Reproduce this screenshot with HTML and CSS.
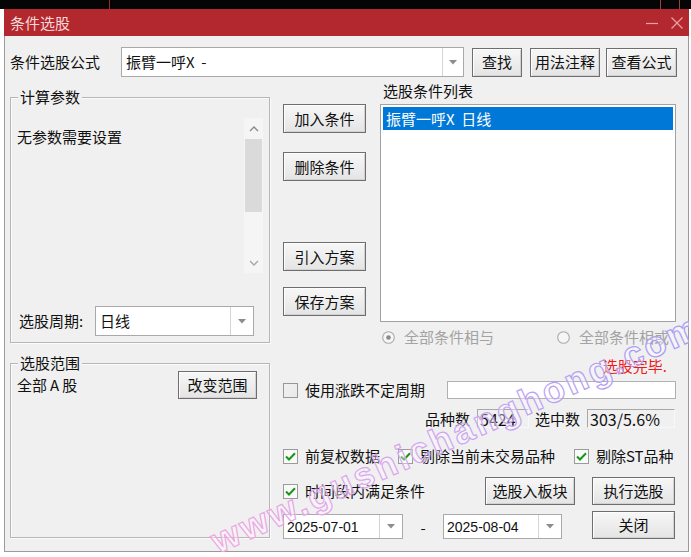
FILE: index.html
```html
<!DOCTYPE html>
<html lang="zh-CN">
<head>
<meta charset="utf-8">
<title>条件选股</title>
<link rel="stylesheet" href="styles.css">
</head>
<body>
<div class="topstrip"></div>
<div class="window">
  <div class="titlebar">
    <span class="title">条件选股</span>
    <span class="tb-btns">
      <svg class="tb-min" width="14" height="14" viewBox="0 0 14 14"><line x1="1" y1="7.5" x2="13" y2="7.5" stroke="currentColor" stroke-width="1.2"/></svg>
      <svg class="tb-close" width="14" height="14" viewBox="0 0 14 14"><path d="M1.5 1.5 L12.5 12.5 M12.5 1.5 L1.5 12.5" stroke="currentColor" stroke-width="1.2" fill="none"/></svg>
    </span>
  </div>
  <div class="body">
    <div class="row1">
      <span class="lbl formula-lbl">条件选股公式</span>
      <div class="combo formula-combo">
        <span class="combo-text">振臂一呼X&nbsp;&nbsp;-</span>
        <span class="combo-arrow"><svg width="8" height="5" viewBox="0 0 8 5"><path d="M0 0 H8 L4 4.5 Z" fill="#8c8c8c"/></svg></span>
      </div>
      <button class="btn btn-find">查找</button>
      <button class="btn btn-usage">用法注释</button>
      <button class="btn btn-view">查看公式</button>
    </div>
    <div class="main">
      <div class="leftcol">
        <div class="group group-params">
          <div class="group-title">计算参数</div>
          <div class="params">
            <div class="params-text">无参数需要设置</div>
            <div class="vscroll">
              <div class="sb-arrow"><svg width="10" height="6" viewBox="0 0 10 6"><polyline points="1,5 5,1 9,5" fill="none" stroke="#8a8a8a" stroke-width="1.4"/></svg></div>
              <div class="sb-thumb"></div>
              <div class="sb-track"></div>
              <div class="sb-arrow"><svg width="10" height="6" viewBox="0 0 10 6"><polyline points="1,1 5,5 9,1" fill="none" stroke="#a8a8a8" stroke-width="1.4"/></svg></div>
            </div>
          </div>
          <div class="period-row">
            <span class="lbl period-lbl">选股周期:</span>
            <div class="combo period-combo">
              <span class="combo-text">日线</span>
              <span class="combo-arrow"><svg width="8" height="5" viewBox="0 0 8 5"><path d="M0 0 H8 L4 4.5 Z" fill="#8c8c8c"/></svg></span>
            </div>
          </div>
        </div>
        <div class="group group-range">
          <div class="group-title">选股范围</div>
          <div class="range-row">
            <span class="range-text">全部<span class="latin-a">A</span>股</span>
            <button class="btn btn-range">改变范围</button>
          </div>
        </div>
      </div>
      <div class="rightcol">
        <div class="upper">
          <div class="btncol">
            <button class="btn btn-side">加入条件</button>
            <button class="btn btn-side btn-del">删除条件</button>
            <button class="btn btn-side btn-import">引入方案</button>
            <button class="btn btn-side btn-save">保存方案</button>
          </div>
          <div class="listcol">
            <div class="list-lbl">选股条件列表</div>
            <div class="listbox">
              <div class="list-item selected">振臂一呼X&nbsp;&nbsp;日线</div>
            </div>
            <div class="radios">
              <span class="radio-item radio-and">
                <svg class="radio" width="13" height="13" viewBox="0 0 13 13"><circle cx="6.5" cy="6.5" r="5.8" fill="#f6f6f6" stroke="#a9a9a9" stroke-width="1.1"/><circle cx="6.5" cy="6.5" r="2.3" fill="#8a8a8a"/></svg>
                <span class="radio-text">全部条件相与</span>
              </span>
              <span class="radio-item radio-or">
                <svg class="radio" width="13" height="13" viewBox="0 0 13 13"><circle cx="6.5" cy="6.5" r="5.8" fill="#f6f6f6" stroke="#a9a9a9" stroke-width="1.1"/></svg>
                <span class="radio-text">全部条件相或</span>
              </span>
            </div>
          </div>
        </div>
        <div class="status">选股完毕.</div>
        <div class="row-period">
          <span class="check"></span>
          <span class="opt-text">使用涨跌不定周期</span>
          <div class="textbox period-input"></div>
        </div>
        <div class="row-counts">
          <span class="cnt-lbl">品种数</span>
          <span class="cnt-box cnt-total">5424</span>
          <span class="cnt-lbl cnt-lbl2">选中数</span>
          <span class="cnt-box cnt-sel">303/5.6%</span>
        </div>
        <div class="row-opts">
          <span class="opt opt-fq"><span class="check checked"><svg width="11" height="9" viewBox="0 0 11 9"><polyline points="1,4.5 4,7.5 10,1.2" fill="none" stroke="#169816" stroke-width="2"/></svg></span><span class="opt-text">前复权数据</span></span>
          <span class="opt opt-trade"><span class="check checked"><svg width="11" height="9" viewBox="0 0 11 9"><polyline points="1,4.5 4,7.5 10,1.2" fill="none" stroke="#169816" stroke-width="2"/></svg></span><span class="opt-text">剔除当前未交易品种</span></span>
          <span class="opt opt-st"><span class="check checked"><svg width="11" height="9" viewBox="0 0 11 9"><polyline points="1,4.5 4,7.5 10,1.2" fill="none" stroke="#169816" stroke-width="2"/></svg></span><span class="opt-text">剔除ST品种</span></span>
        </div>
        <div class="row-actions">
          <span class="opt opt-period"><span class="check checked"><svg width="11" height="9" viewBox="0 0 11 9"><polyline points="1,4.5 4,7.5 10,1.2" fill="none" stroke="#169816" stroke-width="2"/></svg></span><span class="opt-text">时间段内满足条件</span></span>
          <button class="btn btn-block">选股入板块</button>
          <button class="btn btn-run">执行选股</button>
        </div>
        <div class="row-dates">
          <div class="combo date-combo">
            <span class="combo-text date-text">2025-07-01</span>
            <span class="combo-arrow"><svg width="8" height="5" viewBox="0 0 8 5"><path d="M0 0 H8 L4 4.5 Z" fill="#8c8c8c"/></svg></span>
          </div>
          <span class="dash">-</span>
          <div class="combo date-combo date2">
            <span class="combo-text date-text">2025-08-04</span>
            <span class="combo-arrow"><svg width="8" height="5" viewBox="0 0 8 5"><path d="M0 0 H8 L4 4.5 Z" fill="#8c8c8c"/></svg></span>
          </div>
          <button class="btn btn-close">关闭</button>
        </div>
      </div>
    </div>
  </div>
  <svg class="watermark" width="687" height="548" viewBox="0 0 687 548">
    <defs>
      <linearGradient id="wmgrad" gradientUnits="userSpaceOnUse" x1="214" y1="0" x2="684" y2="0">
        <stop offset="0" stop-color="#f2a4e2"/>
        <stop offset="0.5" stop-color="#d2a6f2"/>
        <stop offset="1" stop-color="#a99cf4"/>
      </linearGradient>
    </defs>
    <text x="214" y="545" transform="rotate(-24.2 214 545)" textLength="530" lengthAdjust="spacing" class="wm-text" fill="rgba(255,255,255,0.4)" stroke="url(#wmgrad)" stroke-width="1.2">www.gushichanghong.com</text>
  </svg>
</div>
</body>
</html>
```

FILE: styles.css
```css
* { box-sizing: border-box; }

html, body {
  margin: 0;
  padding: 0;
  background: #ffffff;
}

body {
  width: 691px;
  height: 557px;
  overflow: hidden;
  font-family: "Noto Sans CJK SC", "Microsoft YaHei", sans-serif;
  font-size: 15px;
  line-height: 20px;
  color: #111;
}

.topstrip {
  height: 9px;
  background-color: #050505;
  background-image:
    linear-gradient(#9c2a2a, #9c2a2a),
    linear-gradient(#9c4040, #9c4040),
    linear-gradient(#9c4040, #9c4040);
  background-size: 1px 9px, 1px 9px, 1px 9px;
  background-position: 109px 0, 660px 0, 679px 0;
  background-repeat: no-repeat;
}

.window {
  position: relative;
  margin-left: 4px;
  width: 685px;
  height: 543px;
  overflow: hidden;
}

.titlebar {
  height: 27px;
  background: #b3282e;
  display: flex;
  align-items: center;
  padding-left: 6px;
}

.title {
  color: #f6dada;
  font-size: 15px;
  line-height: 20px;
}

.tb-btns {
  margin-left: auto;
  display: flex;
  align-items: center;
  color: #e7a2a5;
  padding-right: 5px;
}

.tb-min { margin-right: 11px; }

.body {
  height: 516px;
  background: #f0f0f0;
  border: 1px solid #9a9a9a;
  border-top: none;
  padding: 11px 0 0 5px;
}

/* row 1 */
.row1 {
  display: flex;
  align-items: center;
  height: 30px;
}

.formula-lbl { width: 111px; }

.combo {
  display: flex;
  align-items: center;
  background: #fff;
  border: 1px solid #a9a9a9;
}

.combo-text {
  flex: 1;
  padding-left: 4px;
  white-space: nowrap;
  overflow: hidden;
}

.combo-arrow {
  align-self: stretch;
  display: flex;
  align-items: center;
  justify-content: center;
  border-left: 1px solid #d4d4d4;
}

.formula-combo { width: 343px; height: 30px; }
.formula-combo .combo-arrow { width: 21px; }

.btn {
  font-family: inherit;
  font-size: 15px;
  line-height: 20px;
  color: #111;
  padding: 0;
  border: 1px solid #6e6e6e;
  border-radius: 0;
  background: linear-gradient(#f7f7f7, #e4e4e4);
  box-shadow: inset 1px 1px 0 #fdfdfd, inset -1px -1px 0 #d2d2d2;
  height: 29px;
}

.btn-find { margin-left: 8px; width: 50px; }
.btn-usage { margin-left: 8px; width: 70px; }
.btn-view { margin-left: 6px; width: 71px; }

/* main */
.main {
  display: flex;
  align-items: flex-start;
}

.leftcol {
  width: 260px;
  padding-top: 20px;
}

.group {
  border: 1px solid #b6b6b6;
  box-shadow: 1px 1px 0 #fbfbfb, inset 1px 1px 0 #fbfbfb;
}

.group-title {
  width: fit-content;
  margin: -11px 0 0 7px;
  padding: 0 2px;
  line-height: 20px;
  background: #f0f0f0;
}

.group-params { height: 246px; }

.params {
  display: flex;
  margin: 11px 0 0 3px;
  width: 249px;
  height: 155px;
}

.params-text {
  flex: 1;
  padding: 9px 0 0 3px;
}

.vscroll {
  width: 19px;
  display: flex;
  flex-direction: column;
  background: #f5f5f5;
}

.sb-arrow {
  height: 21px;
  display: flex;
  align-items: center;
  justify-content: center;
}

.sb-thumb {
  height: 73px;
  background: #dadada;
  margin: 0 1px;
}

.sb-track { flex: 1; }

.period-row {
  display: flex;
  align-items: center;
  margin-top: 33px;
  height: 30px;
  padding-left: 8px;
}

.period-lbl { width: 76px; }

.period-combo { width: 159px; height: 30px; }
.period-combo .combo-arrow { width: 23px; }

.group-range {
  margin-top: 20px;
  height: 175px;
}

.range-row {
  display: flex;
  align-items: center;
  height: 28px;
  margin-top: -2px;
  padding-left: 6px;
  padding-right: 12px;
}

.latin-a { margin: 0 3px; }

.btn-range {
  margin-left: auto;
  width: 79px;
  height: 28px;
}

/* right column */
.rightcol {
  margin-left: 13px;
  width: 394px;
}

.upper { display: flex; }

.btncol {
  width: 83px;
  padding-top: 27px;
  display: flex;
  flex-direction: column;
}

.btn-side { width: 83px; height: 29px; }
.btn-del { margin-top: 19px; }
.btn-import { margin-top: 61px; }
.btn-save { margin-top: 16px; }

.listcol {
  margin-left: 14px;
  width: 296px;
}

.list-lbl {
  margin-top: 4px;
  padding-left: 3px;
  line-height: 20px;
}

.listbox {
  margin-top: 3px;
  height: 218px;
  background: #fff;
  border: 1px solid #a2a2a2;
  padding: 2px;
}

.list-item {
  height: 23px;
  line-height: 23px;
  padding-left: 3px;
  white-space: nowrap;
}

.list-item.selected {
  background: #0078d7;
  color: #fff;
}

.radios {
  display: flex;
  align-items: center;
  margin-top: 5px;
  height: 20px;
  padding-left: 2px;
}

.radio-item {
  display: flex;
  align-items: center;
}

.radio-and { width: 175px; }

.radio-text {
  margin-left: 9px;
  color: #a3a3a3;
}

.status {
  margin-top: 9px;
  height: 20px;
  text-align: right;
  padding-right: 10px;
  color: #f01818;
}

.check {
  width: 15px;
  height: 15px;
  flex: none;
  border: 1px solid #979797;
  background: linear-gradient(135deg, #f1f1f1, #e9e9e9);
  display: flex;
  align-items: center;
  justify-content: center;
}

.check.checked {
  background: #f9f9f9;
  border-color: #9b9b9b;
}

.opt-text { margin-left: 7px; white-space: nowrap; }

.opt {
  display: flex;
  align-items: center;
}

.row-period {
  display: flex;
  align-items: center;
  margin-top: 4px;
  height: 20px;
}

.textbox {
  background: #fff;
  border: 1px solid #b0b0b0;
}

.period-input {
  margin-left: auto;
  margin-right: 1px;
  width: 229px;
  height: 18px;
}

.row-counts {
  display: flex;
  align-items: center;
  margin-top: 9px;
  height: 19px;
  padding-left: 142px;
}

.cnt-box {
  margin-left: 7px;
  height: 19px;
  line-height: 18px;
  padding-left: 2px;
  border-top: 1px solid #a8a8a8;
  border-left: 1px solid #a8a8a8;
  border-right: 1px solid #f8f8f8;
  border-bottom: 1px solid #f8f8f8;
  font-size: 16px;
  white-space: nowrap;
}

.cnt-total { width: 52px; }
.cnt-lbl2 { margin-left: 6px; }
.cnt-sel { width: 88px; }

.row-opts {
  display: flex;
  align-items: center;
  margin-top: 18px;
  height: 20px;
}

.opt-fq { width: 115px; }
.opt-trade { width: 176px; }

.row-actions {
  display: flex;
  align-items: center;
  margin-top: 11px;
  height: 28px;
}

.opt-period { width: 202px; }

.btn-block { width: 90px; height: 28px; }
.btn-run { margin-left: 17px; width: 83px; height: 28px; }

.row-dates {
  display: flex;
  align-items: flex-end;
  margin-top: 6px;
  height: 28px;
}

.date-combo { width: 120px; height: 25px; }
.date2 { width: 119px; }
.date-combo .combo-arrow { width: 23px; }

.date-text {
  font-family: "Liberation Sans", Arial, sans-serif;
  font-size: 14px;
  padding-left: 3px;
}

.dash {
  width: 40px;
  text-align: center;
  line-height: 22px;
}

.btn-close { margin-left: 30px; width: 83px; height: 28px; }

.watermark {
  position: absolute;
  left: 0;
  top: 0;
  pointer-events: none;
  overflow: visible;
}

.wm-text {
  font-family: "Liberation Sans", Arial, sans-serif;
  font-weight: bold;
  font-size: 36px;
}
```
